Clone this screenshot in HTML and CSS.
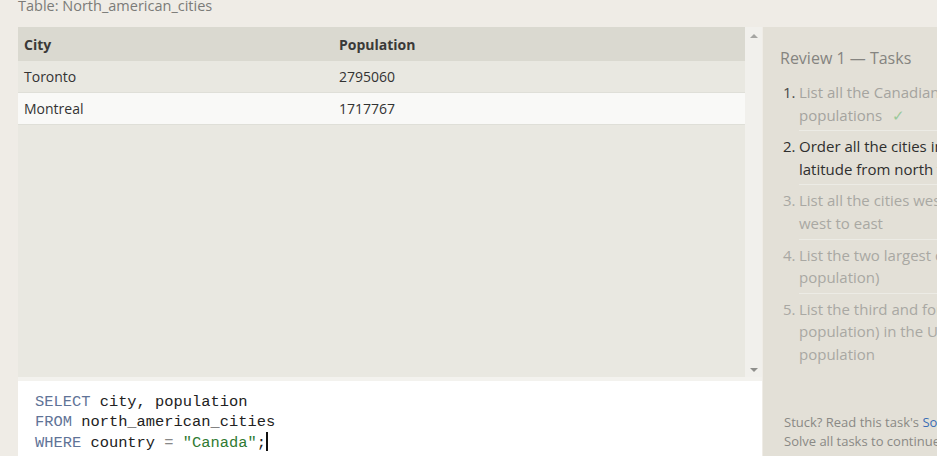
FILE: index.html
```html
<!DOCTYPE html>
<html>
<head>
<meta charset="utf-8">
<link rel="stylesheet" href="styles.css">
</head>
<body>
<div class="page">
  <div class="main">
    <div class="table-title">Table: North_american_cities</div>
    <div class="results">
      <div class="table-scroll">
        <table class="data">
          <thead>
            <tr><th class="c1">City</th><th>Population</th></tr>
          </thead>
          <tbody>
            <tr class="odd"><td>Toronto</td><td>2795060</td></tr>
            <tr class="even"><td>Montreal</td><td>1717767</td></tr>
          </tbody>
        </table>
      </div>
      <div class="scrollbar">
        <span class="arrow up"></span>
        <span class="arrow down"></span>
      </div>
    </div>
    <div class="editor">
<pre class="code"><span class="kw">SELECT</span> city, population
<span class="kw">FROM</span> north_american_cities
<span class="kw">WHERE</span> country <span class="op">=</span> <span class="str">"Canada"</span>;<span class="cursor"></span></pre>
    </div>
  </div>
  <aside class="tasks">
    <h2 class="tasks-title">Review 1 — Tasks</h2>
    <ol class="task-list">
      <li class="task done"><span class="num">1.</span><div class="text">List all the Canadian cities and their<br>populations <span class="check">✓</span></div></li>
      <li class="task current"><span class="num">2.</span><div class="text">Order all the cities in the United States by their<br>latitude from north to south</div></li>
      <li class="task todo"><span class="num">3.</span><div class="text">List all the cities west of Chicago, ordered from<br>west to east</div></li>
      <li class="task todo"><span class="num">4.</span><div class="text">List the two largest cities in Mexico (by<br>population)</div></li>
      <li class="task todo last"><span class="num">5.</span><div class="text">List the third and fourth largest cities (by<br>population) in the United States and their<br>population</div></li>
    </ol>
    <div class="help">
      <div>Stuck? Read this task's <a class="link" href="#">Solution</a>.</div>
      <div>Solve all tasks to continue to the next lesson.</div>
    </div>
  </aside>
</div>
</body>
</html>
```

FILE: styles.css
```css
html, body {
  margin: 0;
  padding: 0;
  overflow: hidden;
  background: #efece6;
  font-family: "Open Sans", "Noto Sans", sans-serif;
}

.page {
  display: flex;
  width: 1200px;
  height: 456px;
}

.main {
  width: 744px;
  padding-left: 18px;
  display: flex;
  flex-direction: column;
  flex: none;
}

.table-title {
  margin-top: -3px;
  height: 30px;
  line-height: 18px;
  font-size: 14.5px;
  color: #7b7b78;
}

.results {
  display: flex;
  height: 350px;
  border-bottom: 4px solid #f3f2ee;
}

.table-scroll {
  flex: 1;
  background: #e9e8e1;
}

.data {
  width: 100%;
  border-collapse: collapse;
  font-size: 14px;
  color: #333;
}

.data th {
  background: #dad9d0;
  text-align: left;
  font-weight: 700;
  height: 34px;
  padding: 0 6px;
  color: #3a3a38;
}

.data th.c1 {
  width: 303px;
}

.data td {
  height: 31px;
  padding: 0 6px;
  border-bottom: 1px solid #dfdfd8;
}

.data tr.odd td {
  background: #e9e8e1;
}

.data tr.even td {
  background: #f9f9f7;
}

.scrollbar {
  width: 17px;
  background: #f1f0ec;
  display: flex;
  flex-direction: column;
  justify-content: space-between;
  align-items: center;
  padding: 7px 0 5px;
  box-sizing: border-box;
}

.arrow {
  width: 0;
  height: 0;
  border-left: 4px solid transparent;
  border-right: 4px solid transparent;
}

.arrow.up {
  border-bottom: 4px solid #a5a5a2;
}

.arrow.down {
  border-top: 4px solid #8f8f8c;
}

.editor {
  flex: 1;
  background: #ffffff;
}

.code {
  margin: 0;
  padding: 11px 0 0 17px;
  font-family: "Liberation Mono", "DejaVu Sans Mono", monospace;
  font-size: 15.4px;
  line-height: 20px;
  color: #222;
}

.kw {
  color: #5f7397;
}

.op {
  color: #888;
}

.str {
  color: #2f7a32;
}

.cursor {
  display: inline-block;
  width: 2px;
  height: 19px;
  background: #111;
  vertical-align: -4px;
}

.tasks {
  margin-top: 27px;
  margin-left: 1px;
  width: 380px;
  flex: none;
  background: #e3e0d7;
  padding: 0 0 5px 17px;
  box-sizing: border-box;
  display: flex;
  flex-direction: column;
}

.tasks-title {
  margin: 19px 0 0;
  font-size: 16px;
  font-weight: 400;
  line-height: 24px;
  color: #858480;
}

.task-list {
  list-style: none;
  margin: 7px 0 0;
  padding: 0 0 0 3px;
  font-size: 15px;
  line-height: 22.6px;
  white-space: nowrap;
}

.task {
  display: flex;
}

.num {
  width: 16px;
  flex: none;
  padding-top: 4px;
}

.text {
  flex: 1;
  padding: 4px 0 4px;
  border-bottom: 1px solid #ecebe5;
}

.task.last .text {
  border-bottom: none;
}

.done .num {
  color: #4a4a48;
}

.done .text {
  color: #a5a49f;
}

.check {
  color: #99c99a;
  margin-left: 6px;
}

.current .num,
.current .text {
  color: #2f2f2e;
}

.todo .num,
.todo .text {
  color: #a9a8a3;
}

.help {
  margin-top: auto;
  font-size: 13px;
  line-height: 19px;
  color: #8a8985;
  padding-left: 4px;
}

.link {
  color: #3a6db5;
  text-decoration: none;
}
```
